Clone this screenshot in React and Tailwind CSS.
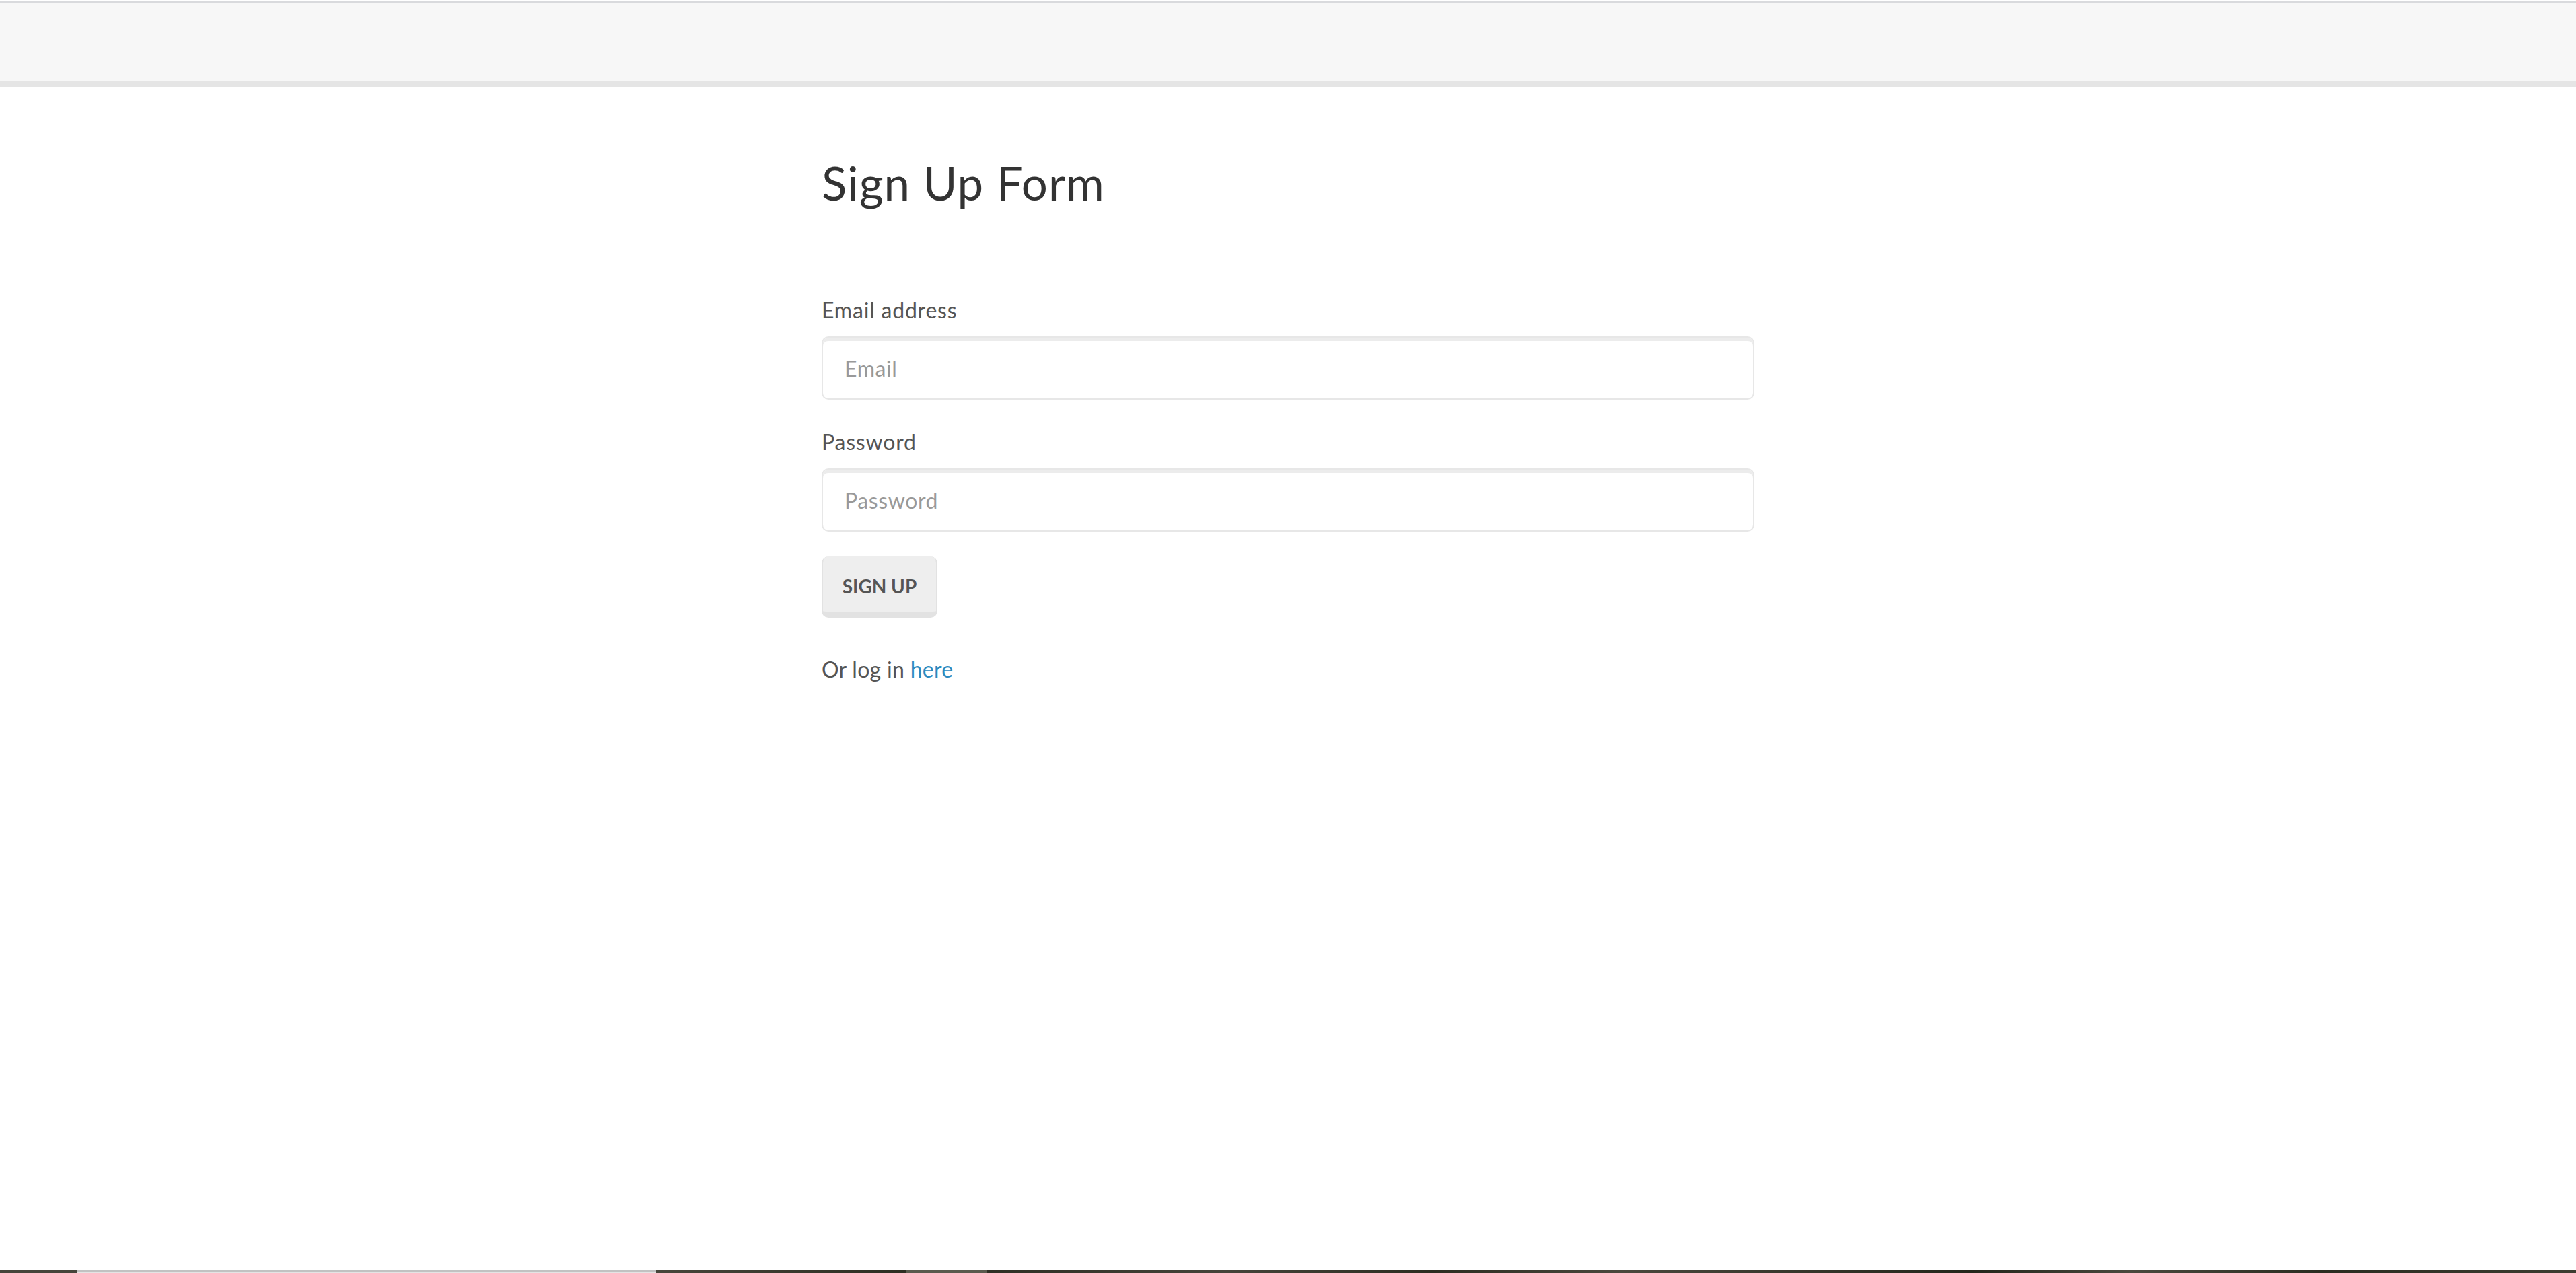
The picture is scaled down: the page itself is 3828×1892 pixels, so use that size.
import React from "react";

const font = { fontFamily: "Lato, 'Open Sans', sans-serif" };

const Field = ({ label, type, placeholder, className = "" }) => (
  <div className={className}>
    <label className="block text-[32px] leading-[46px] tracking-[0.8px] text-[#555555]">{label}</label>
    <input
      type={type}
      placeholder={placeholder}
      className="mt-[16px] block w-full h-[94px] px-[32px] rounded-[10px] border-2 border-[#e7e7e7] bg-white text-[32px] tracking-[0.6px] text-[#555555] placeholder:text-[#999999] shadow-[inset_0_5px_0_rgba(0,0,0,0.075)] outline-none"
    />
  </div>
);

const App = () => {
  return (
    <div className="min-h-screen flex flex-col bg-white" style={font}>
      {/* Navbar */}
      <div className="pt-[2px] bg-white">
        <div className="h-[3px] bg-[#d9dadd]" />
        <div className="h-[125px] bg-[#f7f7f7] border-b-[10px] border-[#e5e5e5]" />
      </div>

      {/* Form */}
      <main className="flex-1">
        <div className="w-[1386px] mx-auto pt-[102px]">
          <h2 className="text-[69px] leading-[80px] tracking-[1px] text-[#333333]">Sign Up Form</h2>

          <form className="mt-[126px]" onSubmit={(e) => e.preventDefault()}>
            <Field label="Email address" type="email" placeholder="Email" />
            <Field label="Password" type="password" placeholder="Password" className="mt-[40px]" />

            <button
              type="submit"
              className="mt-[37px] w-[172px] h-[91px] pt-[6px] flex items-center justify-center rounded-[10px] bg-[#eeeeee] border-x-2 border-t-0 border-b-[9px] border-[#e2e2e2] text-[28px] font-bold text-[#555555]"
            >
              SIGN UP
            </button>
          </form>

          <p className="mt-[54px] text-[32px] leading-[46px] tracking-[0.3px] text-[#555555]">
            Or log in <a href="#" className="text-[#2b8ac0]">here</a>
          </p>
        </div>
      </main>

      {/* Desktop strip */}
      <div className="flex h-[4px]">
        <div className="w-[114px] bg-[#45443a]" />
        <div className="w-[861px] bg-[#c2c2c2] border-b border-[#e4e4e4]" />
        <div className="w-[371px] bg-gradient-to-r from-[#47463b] to-[#2d2e22]" />
        <div className="w-[121px] bg-[#5a5b4e]" />
        <div className="flex-1 bg-[linear-gradient(90deg,#2e2f24_0%,#45443a_15%,#2c2d21_28%,#4a483d_40%,#35352a_52%,#23261b_62%,#4a493e_72%,#2a2c20_84%,#3d3d31_100%)]" />
      </div>
    </div>
  );
};

export default App;
